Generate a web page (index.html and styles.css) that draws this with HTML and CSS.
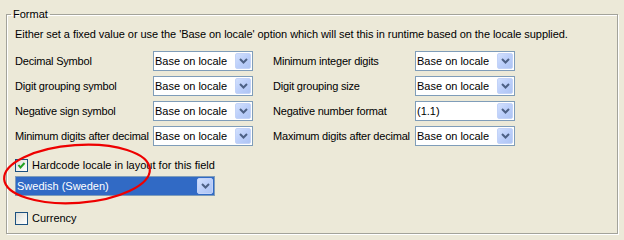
FILE: index.html
```html
<!DOCTYPE html>
<html>
<head>
<meta charset="utf-8">
<link rel="stylesheet" href="styles.css">
</head>
<body>
<fieldset class="group">
  <legend class="legend">Format</legend>
  <p class="desc">Either set a fixed value or use the 'Base on locale' option which will set this in runtime based on the locale supplied.</p>
  <div class="grid">
    <span class="lbl">Decimal Symbol</span>
    <div class="combo"><span class="val">Base on locale</span><span class="btn"><svg width="9" height="6" viewBox="0 0 9 6"><polyline points="1,1 4.5,4.5 8,1" fill="none" stroke="#4d6185" stroke-width="2"/></svg></span></div>
    <span class="lbl">Minimum integer digits</span>
    <div class="combo"><span class="val">Base on locale</span><span class="btn"><svg width="9" height="6" viewBox="0 0 9 6"><polyline points="1,1 4.5,4.5 8,1" fill="none" stroke="#4d6185" stroke-width="2"/></svg></span></div>

    <span class="lbl">Digit grouping symbol</span>
    <div class="combo"><span class="val">Base on locale</span><span class="btn"><svg width="9" height="6" viewBox="0 0 9 6"><polyline points="1,1 4.5,4.5 8,1" fill="none" stroke="#4d6185" stroke-width="2"/></svg></span></div>
    <span class="lbl">Digit grouping size</span>
    <div class="combo"><span class="val">Base on locale</span><span class="btn"><svg width="9" height="6" viewBox="0 0 9 6"><polyline points="1,1 4.5,4.5 8,1" fill="none" stroke="#4d6185" stroke-width="2"/></svg></span></div>

    <span class="lbl">Negative sign symbol</span>
    <div class="combo"><span class="val">Base on locale</span><span class="btn"><svg width="9" height="6" viewBox="0 0 9 6"><polyline points="1,1 4.5,4.5 8,1" fill="none" stroke="#4d6185" stroke-width="2"/></svg></span></div>
    <span class="lbl">Negative number format</span>
    <div class="combo"><span class="val">(1.1)</span><span class="btn"><svg width="9" height="6" viewBox="0 0 9 6"><polyline points="1,1 4.5,4.5 8,1" fill="none" stroke="#4d6185" stroke-width="2"/></svg></span></div>

    <span class="lbl">Minimum digits after decimal</span>
    <div class="combo"><span class="val">Base on locale</span><span class="btn"><svg width="9" height="6" viewBox="0 0 9 6"><polyline points="1,1 4.5,4.5 8,1" fill="none" stroke="#4d6185" stroke-width="2"/></svg></span></div>
    <span class="lbl">Maximum digits after decimal</span>
    <div class="combo"><span class="val">Base on locale</span><span class="btn"><svg width="9" height="6" viewBox="0 0 9 6"><polyline points="1,1 4.5,4.5 8,1" fill="none" stroke="#4d6185" stroke-width="2"/></svg></span></div>
  </div>

  <div class="check first">
    <span class="box"><svg width="11" height="11" viewBox="0 0 11 11"><polyline points="2.5,5 4.5,7.5 8.5,3" fill="none" stroke="#21a121" stroke-width="2"/></svg></span>
    <span class="ctext">Hardcode locale in layout for this field</span>
  </div>
  <div class="combo wide selected"><span class="val">Swedish (Sweden)</span><span class="btn"><svg width="9" height="6" viewBox="0 0 9 6"><polyline points="1,1 4.5,4.5 8,1" fill="none" stroke="#4d6185" stroke-width="2"/></svg></span></div>
  <div class="check last">
    <span class="box"></span>
    <span class="ctext">Currency</span>
  </div>
</fieldset>
<svg class="ellipse" width="160" height="70" viewBox="0 0 160 70">
  <ellipse cx="77" cy="33" rx="73" ry="29" transform="rotate(-4 77 33)" fill="none" stroke="#ee0000" stroke-width="2.2"/>
</svg>
</body>
</html>
```
FILE: styles.css
```css
html, body {
  margin: 0;
  padding: 0;
  background: #ece9d8;
}
body {
  font-family: "Liberation Sans", Arial, sans-serif;
  font-size: 11px;
  color: #000;
  width: 624px;
  height: 240px;
  overflow: hidden;
}
.group {
  margin: 7px 6px 0 6px;
  padding: 6px 8px 8px 8px;
  border: 1px solid #a3a39a;
  box-shadow: inset 1px 1px 0 #fff, 1px 1px 0 #fff;
  min-width: 0;
}
.legend {
  padding: 0 2px;
  margin-left: -4px;
  line-height: 14px;
}
.desc {
  margin: 0;
  line-height: 14px;
  white-space: nowrap;
  letter-spacing: -0.06px;
}
.grid {
  margin-top: 10px;
  display: grid;
  grid-template-columns: 138px 120px 142px 100px;
  grid-auto-rows: 20px;
  row-gap: 5px;
  align-items: center;
}
.lbl {
  white-space: nowrap;
  line-height: 14px;
  letter-spacing: -0.2px;
}
.combo {
  box-sizing: border-box;
  width: 100px;
  height: 20px;
  border: 1px solid #7f9db9;
  background: #fff;
  display: flex;
  align-items: center;
  justify-content: space-between;
}
.val {
  padding-left: 1px;
  white-space: nowrap;
  line-height: 14px;
}
.btn {
  box-sizing: border-box;
  width: 16px;
  height: 16px;
  margin-right: 1px;
  border: 1px solid #c3d3f8;
  border-radius: 2px;
  background: linear-gradient(135deg, #d2e0fd 0%, #bccffa 50%, #aec4f3 100%);
  display: flex;
  align-items: center;
  justify-content: center;
}
.combo.wide {
  width: 200px;
  margin-top: 4px;
}
.combo.selected {
  background: #316ac5;
  border-color: #7f9db9;
}
.combo.selected .val {
  color: #fff;
}
.check {
  display: flex;
  align-items: center;
  height: 14px;
  gap: 4px;
}
.check.first {
  margin-top: 12px;
}
.check.last {
  margin-top: 15px;
}
.box {
  box-sizing: border-box;
  width: 13px;
  height: 13px;
  border: 1px solid #1c5180;
  background: linear-gradient(135deg, #dcdcd7 0%, #f3f3ef 60%, #fff 100%);
  display: flex;
  align-items: center;
  justify-content: center;
}
.ctext {
  white-space: nowrap;
  line-height: 14px;
}
.ellipse {
  position: absolute;
  left: 0;
  top: 141px;
}
```
